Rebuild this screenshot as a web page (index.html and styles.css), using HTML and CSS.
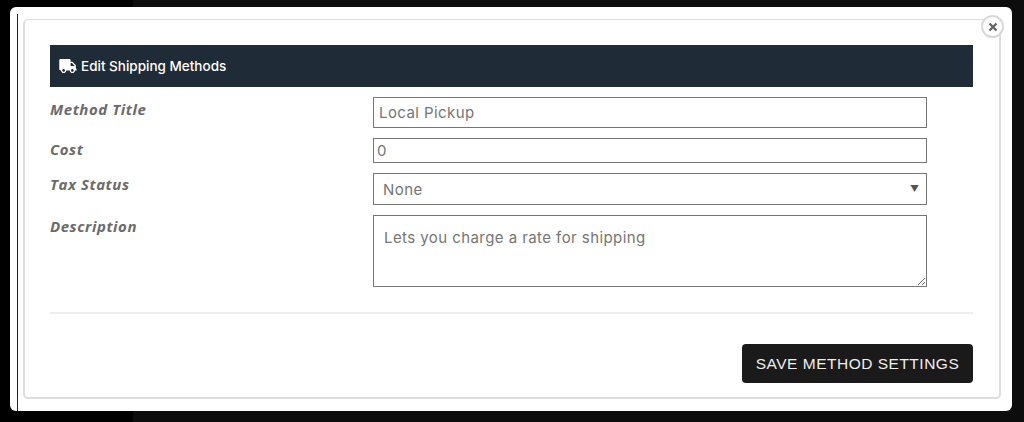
FILE: index.html
```html
<!DOCTYPE html>
<html lang="en">
<head>
    <meta charset="utf-8" />
    <title>Edit Shipping Methods</title>
    <link rel="stylesheet" href="styles.css">
</head>
<body>
    <div class="modal">
        <span class="modal-line"></span>
        <button class="close-btn" type="button">
            <svg viewBox="0 0 10 10" width="10" height="10"><path d="M1.5 1.5 L8.5 8.5 M8.5 1.5 L1.5 8.5" stroke="#666" stroke-width="2.4" fill="none"/></svg>
        </button>
        <div class="panel">
            <div class="panel-title">
                <svg class="truck-icon" viewBox="0 0 640 512" width="18" height="14"><path fill="#fff" d="M624 352h-16V243.900c0-12.700-5.100-24.900-14.100-33.900L494 110.100c-9-9-21.200-14.100-33.900-14.100H416V48c0-26.500-21.500-48-48-48H48C21.500 0 0 21.500 0 48v320c0 26.500 21.500 48 48 48h16c0 53 43 96 96 96s96-43 96-96h128c0 53 43 96 96 96s96-43 96-96h48c8.800 0 16-7.200 16-16v-32c0-8.800-7.200-16-16-16zM160 464c-26.500 0-48-21.500-48-48s21.500-48 48-48 48 21.500 48 48-21.500 48-48 48zm320 0c-26.500 0-48-21.500-48-48s21.500-48 48-48 48 21.500 48 48-21.500 48-48 48zm80-208H416V144h44.100l99.900 99.900V256z"/></svg>
                <span>Edit Shipping Methods</span>
            </div>
            <form class="method-form">
                <label class="field-label">Method Title</label>
                <input class="field field-title" type="text" placeholder="Local Pickup" />
                <label class="field-label label-cost">Cost</label>
                <input class="field field-cost" type="text" value="0" />
                <label class="field-label label-tax">Tax Status</label>
                <div class="select-wrap">
                    <select class="field field-select"><option>None</option></select>
                </div>
                <label class="field-label label-desc">Description</label>
                <textarea class="field field-desc">Lets you charge a rate for shipping</textarea>
            </form>
            <hr class="divider" />
            <div class="actions">
                <button class="save-btn" type="button">SAVE METHOD SETTINGS</button>
            </div>
        </div>
    </div>
</body>
</html>
```

FILE: styles.css
```css
* {
    box-sizing: border-box;
}

html, body {
    height: 100%;
}

body {
    margin: 0;
    padding: 7px 12px 11px 10px;
    background: linear-gradient(to right, #000 133px, #0d0d0d 133px);
    overflow: hidden;
    font-family: "Inter", "Open Sans", sans-serif;
}

.modal {
    position: relative;
    height: 404px;
    padding: 12px 11px 12px 13px;
    background: #fff;
    border-radius: 6px;
}

/* thin dark line left over from the page behind */
.modal-line {
    position: absolute;
    left: 7px;
    top: 7px;
    bottom: 0;
    width: 1px;
    background: #222;
}

.close-btn {
    position: absolute;
    top: 8px;
    right: 8px;
    width: 23px;
    height: 23px;
    padding: 0;
    display: flex;
    align-items: center;
    justify-content: center;
    background: #fff;
    border: 2px solid #d8d8d8;
    border-radius: 50%;
}

.panel {
    height: 380px;
    padding: 25px 26px 0 25px;
    border: 1px solid #ddd;
    border-width: 1px 2px 2px 2px;
    border-radius: 5px;
}

.panel-title {
    height: 42px;
    display: flex;
    align-items: center;
    gap: 4px;
    padding-left: 9px;
    background: #1f2b37;
    color: #fff;
    font-size: 13.5px;
    font-weight: 500;
}

.method-form {
    display: grid;
    grid-template-columns: 323px 554px;
    row-gap: 10px;
    padding-top: 10px;
}

.field-label {
    padding-top: 2px;
    color: #6b6b6b;
    font-family: "Open Sans", sans-serif;
    font-size: 15px;
    font-style: italic;
    font-weight: 700;
    letter-spacing: 0.55px;
}

.label-cost,
.label-tax,
.label-desc {
    padding-top: 1px;
}

.field {
    display: block;
    width: 100%;
    margin: 0;
    background: #fff;
    border: 1px solid #767676;
    border-radius: 0;
    color: #757575;
    font-family: "Inter", "Open Sans", sans-serif;
    font-size: 15px;
    letter-spacing: 0.43px;
    outline: none;
}

.field-title {
    height: 31px;
    padding: 0 5px;
}

.field-title::placeholder {
    color: #757575;
}

.field-cost {
    height: 25px;
    padding: 0 3px;
}

.select-wrap {
    position: relative;
}

.select-wrap::after {
    content: "▼";
    position: absolute;
    top: 10px;
    right: 8px;
    font-size: 9px;
    color: #555;
    pointer-events: none;
}

.field-select {
    height: 32px;
    padding: 0 9px;
    appearance: none;
}

.field-desc {
    height: 72px;
    padding: 13px 10px;
    resize: vertical;
    line-height: 18px;
}

.divider {
    margin: 25px 0 0;
    border: 0;
    border-top: 2px solid #eee;
}

.actions {
    display: flex;
    justify-content: flex-end;
    padding-top: 30px;
}

.save-btn {
    width: 231px;
    height: 39px;
    padding: 0;
    background: #1a1a1a;
    border: 0;
    border-radius: 4px;
    color: #eee;
    font-family: "Liberation Sans", Arial, sans-serif;
    font-size: 15.5px;
    letter-spacing: 0.5px;
}
```
